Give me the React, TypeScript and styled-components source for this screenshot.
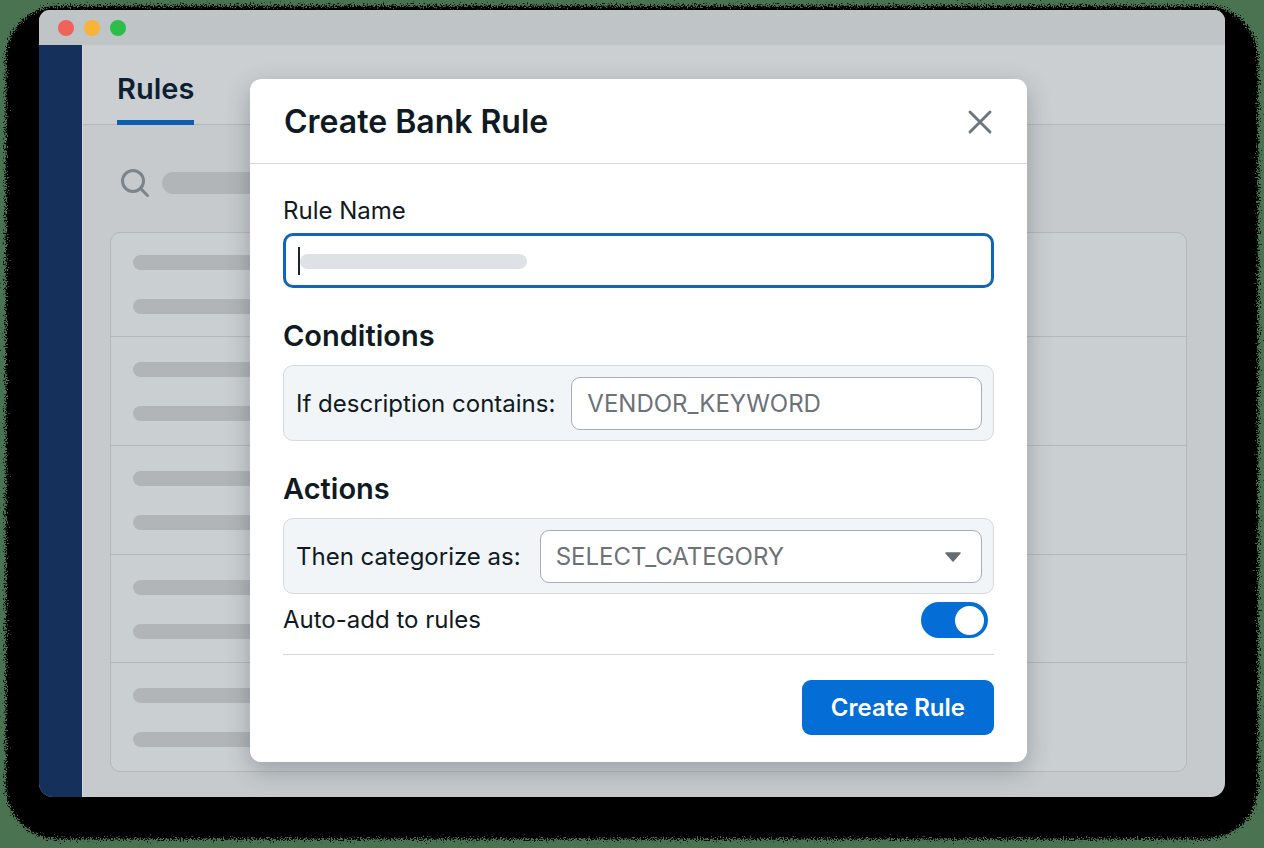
import React from "react";
import styled, { createGlobalStyle } from "styled-components";

const GlobalStyle = createGlobalStyle`
  *, *::before, *::after { box-sizing: border-box; }
  body {
    margin: 0;
    background: #4a7451;
    color: #101a22;
    font-family: Inter, "Liberation Sans", sans-serif;
  }
  button, input, select { font: inherit; color: inherit; }
`;

const Stage = styled.div`
  position: relative;
  display: flex;
  min-height: 100vh;
  padding: 10px 39px 51px;
  overflow: hidden;
`;

const Halo = styled.div`
  position: absolute;
  inset: 6px 6px 9px;
  border-radius: 52px;
  background: #000;
  filter: url(#grain-edge);
`;

const HiddenDefs = styled.svg`
  position: absolute;
  width: 0;
  height: 0;
`;

const Window = styled.div`
  position: relative;
  flex: 1;
  min-width: 0;
  display: grid;
  border-radius: 11px 11px 14px 14px;
  overflow: hidden;
  background: #c6cacd;
`;

const Backdrop = styled.div`
  grid-area: 1 / 1;
  min-width: 0;
  display: flex;
  flex-direction: column;
`;

const TitleBar = styled.div`
  display: flex;
  align-items: center;
  gap: 10px;
  height: 35px;
  padding: 0 19px;
  background: #bfc4c7;
`;

const Light = styled.span<{ $color: string }>`
  width: 16px;
  height: 16px;
  border-radius: 50%;
  background: ${(p) => p.$color};
`;

const Workspace = styled.div`
  flex: 1;
  display: flex;
`;

const Sidebar = styled.nav`
  flex: none;
  width: 43px;
  background: #15315b;
`;

const Main = styled.main`
  flex: 1;
  min-width: 0;
  display: flex;
  flex-direction: column;
  border-left: 1px solid #d3d8dc;
`;

const TabBar = styled.header`
  display: flex;
  height: 80px;
  padding: 0 34px;
  border-bottom: 1px solid #b1b6ba;
  background: #cbcfd2;
`;

const Tab = styled.a`
  height: 80px;
  padding-top: 26px;
  border-bottom: 5px solid #0f5eac;
  color: #0f1f33;
  font-size: 29px;
  font-weight: 600;
  line-height: 36px;
  text-decoration: none;
`;

const SearchRow = styled.div`
  display: flex;
  align-items: flex-start;
  gap: 12px;
  height: 107px;
  padding: 43px 38px 0 37px;
`;

const Bar = styled.span<{ $thick?: boolean }>`
  display: block;
  width: 300px;
  height: ${(p) => (p.$thick ? 22 : 15)}px;
  margin-top: ${(p) => (p.$thick ? 4 : 0)}px;
  border-radius: 11px;
  background: #b1b5b8;
`;

const RuleList = styled.ul`
  flex: 1;
  display: flex;
  flex-direction: column;
  margin: 0 38px 25px 27px;
  padding: 0;
  border: 1px solid #b3b8bb;
  border-radius: 10px;
  background: #cacfd1;
  list-style: none;
`;

const RuleItem = styled.li`
  flex: 1 0 108px;
  display: flex;
  flex-direction: column;
  gap: 29px;
  padding: 25px 22px 0;
  border-top: 1px solid #b3b8bb;
  &:first-child {
    flex: 0 0 103px;
    padding-top: 22px;
    border-top: 0;
  }
`;

const Overlay = styled.div`
  grid-area: 1 / 1;
  z-index: 1;
  display: flex;
  padding: 69px 198px 35px 211px;
`;

const Modal = styled.form`
  flex: 1;
  min-width: 0;
  border-radius: 11px;
  background: #fff;
  box-shadow: 0 8px 24px rgba(40, 50, 60, 0.3);
`;

const ModalHeader = styled.div`
  display: flex;
  align-items: center;
  justify-content: space-between;
  height: 85px;
  padding: 2px 34px 0;
  border-bottom: 1px solid #d5d8db;
`;

const Title = styled.h1`
  margin: 0;
  font-size: 32px;
  font-weight: 600;
  line-height: 40px;
`;

const CloseButton = styled.button`
  display: flex;
  padding: 0;
  border: 0;
  background: none;
  color: #6d7680;
`;

const ModalBody = styled.div`
  padding: 31px 33px 0;
`;

const FieldLabel = styled.label`
  display: block;
  font-size: 24px;
  line-height: 32px;
  white-space: nowrap;
`;

const NameField = styled.div`
  position: relative;
  margin-top: 6px;
`;

const NameInput = styled.input`
  display: block;
  width: 100%;
  height: 55px;
  padding: 0 14px;
  border: 3px solid #1166b3;
  border-radius: 10px;
  background: #fff;
  outline: none;
`;

const EmptyHint = styled.span`
  position: absolute;
  top: 14px;
  left: 15px;
  display: flex;
  align-items: center;
  height: 28px;
  border-left: 2px solid #1b2530;
  pointer-events: none;
  &::after {
    content: "";
    width: 227px;
    height: 15px;
    border-radius: 8px;
    background: #dee1e5;
  }
`;

const SectionTitle = styled.h2`
  margin: 29px 0 10px;
  font-size: 29px;
  font-weight: 600;
  line-height: 38px;
`;

const Panel = styled.div<{ $gap: number }>`
  display: flex;
  align-items: center;
  gap: ${(p) => p.$gap}px;
  padding: 11px 11px 10px 12px;
  border: 1px solid #d6dadd;
  border-radius: 10px;
  background: #f1f5f8;
`;

const TextInput = styled.input`
  flex: 1;
  min-width: 0;
  height: 53px;
  padding: 0 15px;
  border: 1px solid #a9afb5;
  border-radius: 9px;
  background: #fff;
  font-size: 24px;
  outline: none;
  &::placeholder { color: #6c7278; opacity: 1; }
`;

const SelectField = styled.div`
  position: relative;
  flex: 1;
  display: flex;
  min-width: 0;
`;

const Select = styled.select`
  flex: 1;
  min-width: 0;
  height: 53px;
  padding: 0 48px 0 15px;
  border: 1px solid #a9afb5;
  border-radius: 9px;
  background: #fff;
  color: #6c7278;
  font-size: 24px;
  appearance: none;
`;

const Caret = styled.svg`
  position: absolute;
  top: 22px;
  right: 20px;
  pointer-events: none;
`;

const ToggleRow = styled.div`
  display: flex;
  align-items: center;
  justify-content: space-between;
  height: 61px;
  padding: 0 6px 8px 0;
  border-bottom: 1px solid #d5d8db;
`;

const Toggle = styled.input`
  appearance: none;
  display: flex;
  align-items: center;
  justify-content: flex-start;
  width: 67px;
  height: 36px;
  margin: 0;
  padding: 0 4px;
  border-radius: 18px;
  background: #a9afb5;
  &::before {
    content: "";
    width: 29px;
    height: 29px;
    border-radius: 50%;
    background: #fff;
  }
  &:checked {
    justify-content: flex-end;
    background: #056dd6;
  }
`;

const Actions = styled.div`
  display: flex;
  justify-content: flex-end;
  padding: 25px 0 26px;
`;

const SubmitButton = styled.button`
  height: 55px;
  padding: 0 29px;
  border: 0;
  border-radius: 9px;
  background: #056dd6;
  color: #fff;
  font-size: 24px;
  font-weight: 600;
`;

const rows = [1, 2, 3, 4, 5];

export default function App() {
  return (
    <Stage>
      <GlobalStyle />
      <HiddenDefs aria-hidden="true">
        <filter id="grain-edge" x="-5%" y="-5%" width="110%" height="110%" colorInterpolationFilters="sRGB">
          <feGaussianBlur in="SourceAlpha" stdDeviation="4" result="soft" />
          <feTurbulence type="fractalNoise" baseFrequency="0.7" numOctaves="1" seed="4" />
          <feColorMatrix type="matrix" values="0 0 0 0 0  0 0 0 0 0  0 0 0 0 0  1 0 0 0 0" result="noise" />
          <feComposite in="soft" in2="noise" operator="arithmetic" k1="0" k2="0.9" k3="1.2" k4="-0.6" />
          <feComponentTransfer>
            <feFuncA type="linear" slope="8" intercept="-3" />
          </feComponentTransfer>
        </filter>
      </HiddenDefs>
      <Halo />
      <Window>
        <Backdrop>
          <TitleBar>
            <Light $color="#f0625a" />
            <Light $color="#f7b436" />
            <Light $color="#2dbd4a" />
          </TitleBar>
          <Workspace>
            <Sidebar aria-label="Main" />
            <Main>
              <TabBar>
                <Tab href="#rules">Rules</Tab>
              </TabBar>
              <SearchRow>
                <svg width="30" height="30" viewBox="0 0 30 30" fill="none" stroke="#7b838b" strokeWidth="3" strokeLinecap="round" aria-hidden="true">
                  <circle cx="13" cy="13" r="10.5" />
                  <path d="M20.8 20.8 L27.5 27.5" />
                </svg>
                <Bar $thick />
              </SearchRow>
              <RuleList>
                {rows.map((row) => (
                  <RuleItem key={row}>
                    <Bar />
                    <Bar />
                  </RuleItem>
                ))}
              </RuleList>
            </Main>
          </Workspace>
        </Backdrop>
        <Overlay>
          <Modal role="dialog" aria-labelledby="dialog-title" onSubmit={(e) => e.preventDefault()}>
            <ModalHeader>
              <Title id="dialog-title">Create Bank Rule</Title>
              <CloseButton type="button" aria-label="Close">
                <svg width="26" height="26" viewBox="0 0 26 26" fill="none" stroke="currentColor" strokeWidth="2.9" strokeLinecap="round" aria-hidden="true">
                  <path d="M3 3 L23 23 M23 3 L3 23" />
                </svg>
              </CloseButton>
            </ModalHeader>
            <ModalBody>
              <FieldLabel htmlFor="rule-name">Rule Name</FieldLabel>
              <NameField>
                <NameInput id="rule-name" type="text" />
                <EmptyHint />
              </NameField>
              <SectionTitle>Conditions</SectionTitle>
              <Panel $gap={16}>
                <FieldLabel htmlFor="keyword">If description contains:</FieldLabel>
                <TextInput id="keyword" type="text" placeholder="VENDOR_KEYWORD" />
              </Panel>
              <SectionTitle>Actions</SectionTitle>
              <Panel $gap={19}>
                <FieldLabel htmlFor="category">Then categorize as:</FieldLabel>
                <SelectField>
                  <Select id="category">
                    <option>SELECT_CATEGORY</option>
                  </Select>
                  <Caret width="18" height="11" viewBox="0 0 18 11" aria-hidden="true">
                    <path d="M2 1 H16 L9 9 Z" fill="#656c73" stroke="#656c73" strokeWidth="1.5" strokeLinejoin="round" />
                  </Caret>
                </SelectField>
              </Panel>
              <ToggleRow>
                <FieldLabel htmlFor="auto-add">Auto-add to rules</FieldLabel>
                <Toggle id="auto-add" type="checkbox" role="switch" defaultChecked />
              </ToggleRow>
              <Actions>
                <SubmitButton type="submit">Create Rule</SubmitButton>
              </Actions>
            </ModalBody>
          </Modal>
        </Overlay>
      </Window>
    </Stage>
  );
}
